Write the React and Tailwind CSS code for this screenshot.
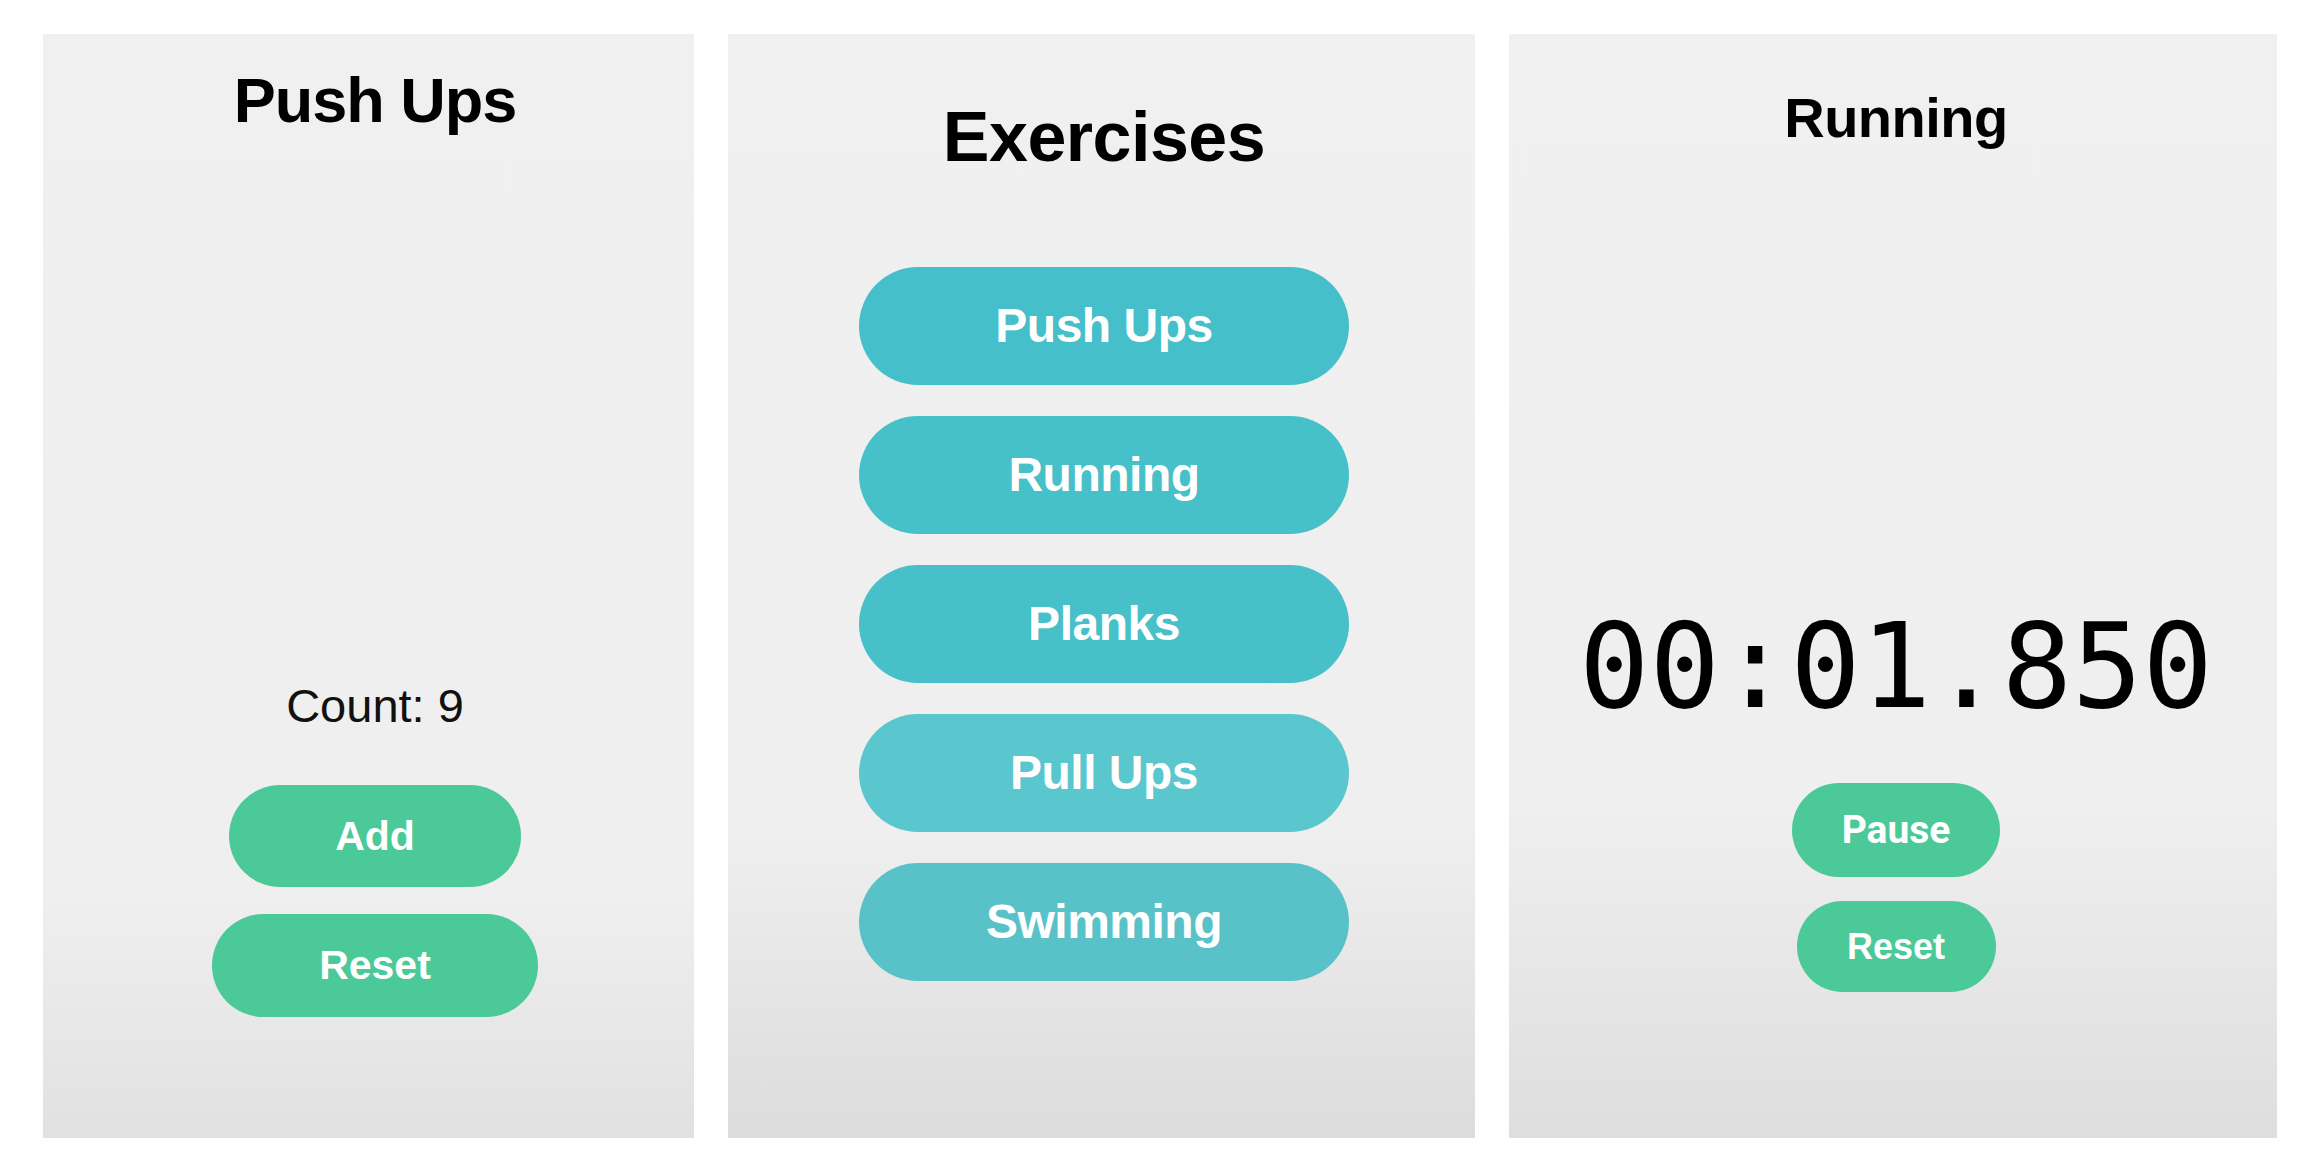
import React from "react";

function GreenButton({ w, h, size, children, font }) {
  return (
    <button
      className={`flex items-center justify-center rounded-full bg-[#4bc998] text-white font-bold leading-none ${w} ${h} ${size} ${font}`}
    >
      {children}
    </button>
  );
}

export default function App() {
  const exercises = [
    { name: "Push Ups", bg: "bg-[#45bfc9]" },
    { name: "Running", bg: "bg-[#46c0c9]" },
    { name: "Planks", bg: "bg-[#47c0c9]" },
    { name: "Pull Ups", bg: "bg-[#5ac6cd]" },
    { name: "Swimming", bg: "bg-[#59c2c9]" },
  ];

  return (
    <div className="min-h-screen w-full bg-white font-['Liberation_Sans',Arial,sans-serif]">
      <div className="flex gap-[34px] pl-[43px] pt-[34px]">
        {/* Panel 1: Push Ups counter */}
        <div className="flex h-[1104px] w-[651px] flex-col items-center bg-[linear-gradient(to_bottom,#f0f0f0_0%,#efefef_78%,#e1e1e1_100%)] pl-[13px] pt-[35px]">
          <h1 className="text-[63px] font-bold leading-none tracking-[-1px] text-black">
            Push Ups
          </h1>
          <p className="mt-[550px] text-[47px] leading-none text-[#111]">
            Count: 9
          </p>
          <div className="mt-[56px] flex flex-col items-center gap-[27px]">
            <GreenButton w="w-[292px]" h="h-[102px]" size="text-[41px]" font="">
              Add
            </GreenButton>
            <GreenButton w="w-[326px]" h="h-[103px]" size="text-[41px]" font="">
              Reset
            </GreenButton>
          </div>
        </div>

        {/* Panel 2: Exercises list */}
        <div className="flex h-[1104px] w-[747px] flex-col items-center bg-[linear-gradient(to_bottom,#f0f0f0_0%,#efefef_72%,#dcdcdc_100%)] pl-[5px] pt-[68px]">
          <h1 className="text-[70px] font-bold leading-none tracking-[-0.5px] text-black">
            Exercises
          </h1>
          <div className="mt-[95px] flex flex-col items-center gap-[31px]">
            {exercises.map((e) => (
              <button
                key={e.name}
                className={`flex h-[118px] w-[490px] items-center justify-center rounded-full ${e.bg} text-[48px] font-bold leading-none tracking-[-0.5px] text-white`}
              >
                {e.name}
              </button>
            ))}
          </div>
        </div>

        {/* Panel 3: Running stopwatch */}
        <div className="flex h-[1104px] w-[768px] flex-col items-center bg-[linear-gradient(to_bottom,#f0f0f0_0%,#efefef_70%,#dedede_100%)] pl-[6px] pt-[56px]">
          <h1 className="text-[56px] font-bold leading-none tracking-[-0.5px] text-black">
            Running
          </h1>
          <div className="mt-[462px] font-['DejaVu_Sans_Mono',monospace] text-[117px] leading-none text-black">
            00:01.850
          </div>
          <div className="mt-[58px] flex flex-col items-center gap-[24px]">
            <GreenButton
              w="w-[208px]"
              h="h-[94px]"
              size="text-[39px]"
              font="font-['Roboto',sans-serif]"
            >
              Pause
            </GreenButton>
            <GreenButton w="w-[199px]" h="h-[91px]" size="text-[36px]" font="">
              Reset
            </GreenButton>
          </div>
        </div>
      </div>
    </div>
  );
}
